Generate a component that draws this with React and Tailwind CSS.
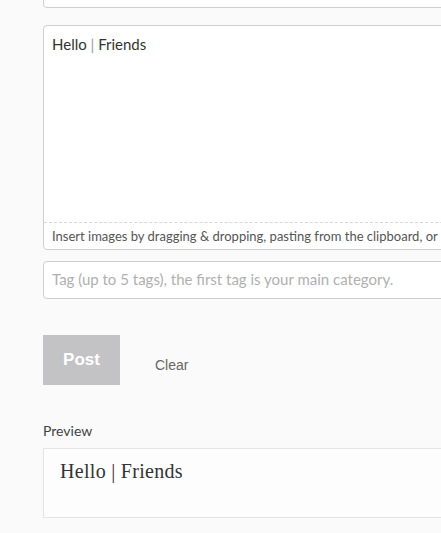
import React from "react";

const sans = { fontFamily: "Lato, 'Open Sans', sans-serif" };

export default function App() {
  return (
    <div className="h-[533px] w-[441px] overflow-hidden bg-[#fafafa]" style={sans}>
      <div className="w-[700px] pl-[43px]">
        <div className="-mt-[30px] h-[38px] rounded border border-[#cfcfcf] bg-white" />

        <div className="mt-[17px] rounded border border-[#cfcfcf] bg-white">
          <div className="h-[196px] px-[8px] pt-[7px] text-[15px] text-[#333]">
            Hello <span className="text-[#999]">|</span> Friends
          </div>
          <div className="border-t border-dashed border-[#d8d8d8] px-[8px] pb-[2px] pt-[4px] text-[13px] text-[#555]">
            Insert images by dragging &amp; dropping, pasting from the clipboard, or
          </div>
        </div>

        <div className="mt-[11px] flex h-[38px] items-center rounded border border-[#cfcfcf] bg-white px-[8px] text-[15px] text-[#b0b0b0]">
          Tag (up to 5 tags), the first tag is your main category.
        </div>

        <div className="mt-[36px] flex items-center">
          <div
            className="flex h-[50px] w-[77px] items-center justify-center bg-[#c3c3c5] text-[17px] font-bold text-white"
            style={{ fontFamily: "'Liberation Sans', Arial, sans-serif" }}
          >
            Post
          </div>
          <div
            className="ml-[35px] mt-[11px] text-[14px] text-[#666]"
            style={{ fontFamily: "'Liberation Sans', Arial, sans-serif" }}
          >
            Clear
          </div>
        </div>

        <div className="mt-[35px] text-[14px] text-[#444]">Preview</div>
        <div className="mt-[7px] h-[70px] border border-[#e4e4e4] bg-[#fdfdfd] px-[16px] pt-[7px]">
          <div
            className="text-[20px] tracking-[0.3px] text-[#333]"
            style={{ fontFamily: "'Liberation Serif', 'Times New Roman', serif" }}
          >
            Hello | Friends
          </div>
        </div>
      </div>
    </div>
  );
}
